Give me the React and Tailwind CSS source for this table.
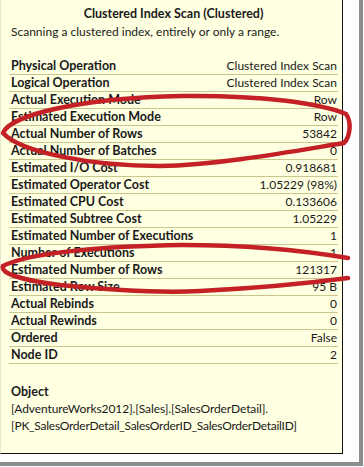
import React from 'react';

const rows = [
  ['Physical Operation', 'Clustered Index Scan'],
  ['Logical Operation', 'Clustered Index Scan'],
  ['Actual Execution Mode', 'Row'],
  ['Estimated Execution Mode', 'Row'],
  ['Actual Number of Rows', '53842'],
  ['Actual Number of Batches', '0'],
  ['Estimated I/O Cost', '0.918681'],
  ['Estimated Operator Cost', '1.05229 (98%)'],
  ['Estimated CPU Cost', '0.133606'],
  ['Estimated Subtree Cost', '1.05229'],
  ['Estimated Number of Executions', '1'],
  ['Number of Executions', '1'],
  ['Estimated Number of Rows', '121317'],
  ['Estimated Row Size', '95 B'],
  ['Actual Rebinds', '0'],
  ['Actual Rewinds', '0'],
  ['Ordered', 'False'],
  ['Node ID', '2'],
];

const App = () => {
  return (
    <div className="w-[364px] h-[467px] bg-white relative overflow-hidden font-['Segoe_UI',Lato,sans-serif] text-[12px] text-[#1a1a1a]">
      {/* marco con sombra */}
      <div className="w-[363px] h-[466px] border-r-[4px] border-b-[4px] border-[#8c8c8c] bg-white">
        <div className="w-[343px] h-[454px] bg-[#ffffe1] border-l border-l-[#e6e6d0] border-r border-b border-r-[#111] border-b-[#111] pl-[8px] pr-[4px]">
          <div className="h-[24px] pt-[6px] text-center font-bold text-[12.5px] leading-[16px]">
            Clustered Index Scan (Clustered)
          </div>
          <div className="pl-[2px] leading-[16px]">
            Scanning a clustered index, entirely or only a range.
          </div>

          {/* Propiedades */}
          <div className="mt-[18px]">
            {rows.map(([label, value], i) => (
              <div
                key={i}
                className="h-[17px] flex justify-between items-center border-b border-[#c8c88c] pl-[2px] pr-[1px] leading-[16px]"
              >
                <span className="font-bold text-[12.5px]">{label}</span>
                <span>{value}</span>
              </div>
            ))}
          </div>

          <div className="mt-[19px] pl-[2px] leading-[17px]">
            <div className="font-bold text-[12.5px]">Object</div>
            <div className="tracking-[-0.1px]">[AdventureWorks2012].[Sales].[SalesOrderDetail].</div>
            <div className="tracking-[-0.25px]">[PK_SalesOrderDetail_SalesOrderID_SalesOrderDetailID]</div>
          </div>
        </div>
      </div>

      {/* marcas rojas a mano */}
      <svg className="absolute inset-0 pointer-events-none" width="364" height="467" viewBox="0 0 364 467">
        <path
          d="M 3 133 C 10 115 80 98 182 96 C 260 95 320 103 346 114 C 352 122 350 137 344 143 C 300 150 220 165 160 166 C 90 166 20 152 3 133 Z"
          fill="none"
          stroke="#c42127"
          strokeWidth="4.5"
          strokeLinejoin="round"
        />
        <path
          d="M 348 258 C 300 250 240 245 182 245 C 110 246 30 252 3 266 C 0 273 20 280 60 285 C 110 290 160 293 200 291 C 260 288 310 283 348 278"
          fill="none"
          stroke="#c42127"
          strokeWidth="4.5"
          strokeLinecap="round"
        />
      </svg>
    </div>
  );
};

export default App;
